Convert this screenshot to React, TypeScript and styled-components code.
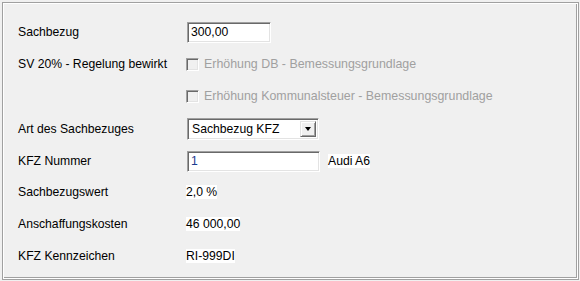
import React from "react";
import styled, { createGlobalStyle } from "styled-components";

const Global = createGlobalStyle`
  html, body { margin: 0; padding: 0; background: #f0f0f0; }
  body { font-family: "Liberation Sans", Arial, sans-serif; font-size: 12.2px; color: #000; }
`;

const Frame = styled.div`
  margin: 2px 0 0 2px;
  width: 577px;
  height: 278px;
  box-sizing: border-box;
  border: 1px solid #a0a0a0;
  box-shadow: inset 1px 1px 0 #fff, inset -1px -1px 0 #fff, inset -2px -2px 0 #a0a0a0;
  background: #f0f0f0;
  padding: 13px 0 0 15px;
`;

const Form = styled.div`
  display: grid;
  grid-template-columns: 169px 1fr;
  grid-template-rows: 32px 32px 32px 34px 30px 32px 32px 32px;
  align-items: center;
`;

const Label = styled.div`
  line-height: 14px;
  white-space: nowrap;
`;

const Cell = styled.div`
  display: flex;
  align-items: center;
  gap: 9px;
`;

const TextBox = styled.div<{ $w: number; $color?: string }>`
  width: ${(p) => p.$w}px;
  height: 21px;
  box-sizing: border-box;
  background: #fff;
  border-top: 1px solid #a0a0a0;
  border-left: 1px solid #a0a0a0;
  border-right: 1px solid #fff;
  border-bottom: 1px solid #fff;
  box-shadow: inset 1px 1px 0 #696969, inset -1px -1px 0 #e3e3e3;
  padding: 0 3px;
  display: flex;
  align-items: center;
  color: ${(p) => p.$color || "#000"};
`;

const Select = styled.div`
  width: 132px;
  height: 22px;
  box-sizing: border-box;
  background: #fff;
  border-top: 1px solid #a0a0a0;
  border-left: 1px solid #a0a0a0;
  border-right: 1px solid #fff;
  border-bottom: 1px solid #fff;
  box-shadow: inset 1px 1px 0 #696969, inset -1px -1px 0 #e3e3e3;
  display: flex;
  align-items: center;
  padding: 2px 2px 2px 4px;
  justify-content: space-between;
`;

const DropButton = styled.div`
  width: 16px;
  height: 16px;
  box-sizing: border-box;
  background: #f0f0f0;
  border-top: 1px solid #e3e3e3;
  border-left: 1px solid #e3e3e3;
  border-right: 1px solid #696969;
  border-bottom: 1px solid #696969;
  box-shadow: inset 1px 1px 0 #fff, inset -1px -1px 0 #a0a0a0;
  display: flex;
  align-items: center;
  justify-content: center;
`;

const Arrow = styled.div`
  width: 0;
  height: 0;
  border-left: 3.5px solid transparent;
  border-right: 3.5px solid transparent;
  border-top: 4px solid #000;
`;

const CheckRow = styled.div`
  display: flex;
  align-items: center;
  gap: 5px;
  margin-left: -1px;
  font-size: 12.4px;
  color: #a0a0a0;
  white-space: nowrap;
`;

const CheckBox = styled.div`
  width: 13px;
  height: 13px;
  box-sizing: border-box;
  border-top: 1px solid #a0a0a0;
  border-left: 1px solid #a0a0a0;
  border-right: 1px solid #fff;
  border-bottom: 1px solid #fff;
  box-shadow: inset 1px 1px 0 #696969, inset -1px -1px 0 #e3e3e3;
  background: #f0f0f0;
`;

const Value = styled.span`
  background: #fff;
  line-height: 14px;
  margin-left: -1px;
  white-space: nowrap;
`;

export default function App() {
  return (
    <>
      <Global />
      <Frame>
        <Form>
          <Label>Sachbezug</Label>
          <Cell>
            <TextBox $w={84}>300,00</TextBox>
          </Cell>

          <Label>SV 20% - Regelung bewirkt</Label>
          <CheckRow>
            <CheckBox />
            <span>Erhöhung DB - Bemessungsgrundlage</span>
          </CheckRow>

          <div />
          <CheckRow>
            <CheckBox />
            <span>Erhöhung Kommunalsteuer - Bemessungsgrundlage</span>
          </CheckRow>

          <Label>Art des Sachbezuges</Label>
          <Cell>
            <Select>
              <span>Sachbezug KFZ</span>
              <DropButton>
                <Arrow />
              </DropButton>
            </Select>
          </Cell>

          <Label>KFZ Nummer</Label>
          <Cell>
            <TextBox $w={133} $color="#1a3c8f">1</TextBox>
            <Value>Audi A6</Value>
          </Cell>

          <Label>Sachbezugswert</Label>
          <Cell>
            <Value>2,0 %</Value>
          </Cell>

          <Label>Anschaffungskosten</Label>
          <Cell>
            <Value>46 000,00</Value>
          </Cell>

          <Label>KFZ Kennzeichen</Label>
          <Cell>
            <Value>RI-999DI</Value>
          </Cell>
        </Form>
      </Frame>
    </>
  );
}
